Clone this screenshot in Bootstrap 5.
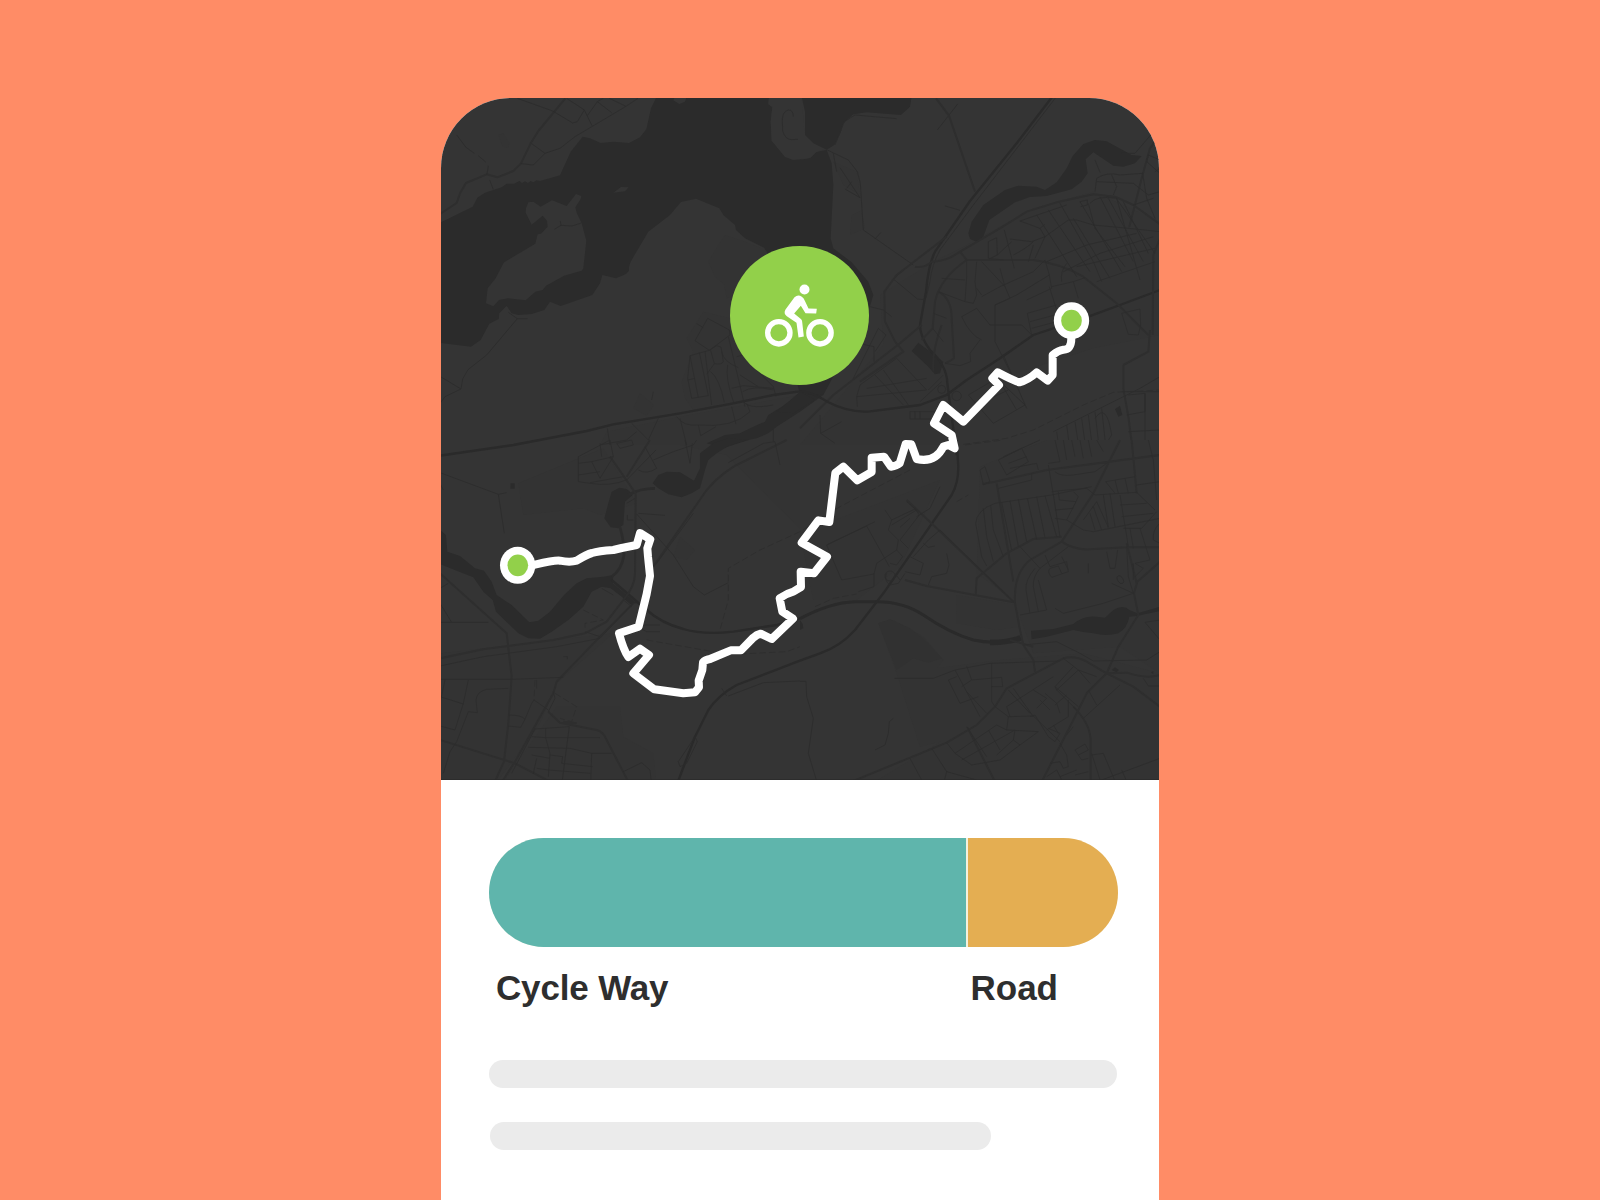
<!DOCTYPE html>
<html lang="en">
<head>
<meta charset="utf-8">
<meta name="viewport" content="width=device-width, initial-scale=1">
<title>Cycle route</title>
<link href="https://cdn.jsdelivr.net/npm/bootstrap@5.3.0/dist/css/bootstrap.min.css" rel="stylesheet">
<style>
body{background:#ff8c66;font-family:"Liberation Sans",Arial,sans-serif;height:1200px;overflow:hidden}
.route-card{width:718px;height:1102px;margin-top:98px;border-radius:70px 70px 0 0}
.route-map{height:682px;background:#343434}
.mode-badge{width:139px;height:139px;top:148px;left:289px;background:#92d04a}
.details{padding:57.5px 41px 0 48.4px}
.split{height:109.5px;gap:2px;background:#f4f1df}
.seg-cycle{background:#5fb5ac}
.seg-road{background:#e4ae52}
.legend-row{margin-top:20px;color:#2e2e2e;font-size:35px;line-height:42px;font-weight:700}
.legend-cycle{padding-left:6.6px;width:481.1px;letter-spacing:-.15px}
.bone{height:28.2px;background:#ebebeb}
.bone-list{margin-top:51.2px;gap:33.2px}
.land{fill:#343434}.tint{fill:#333}.water{fill:#2b2b2b}
.big,.mid,.thin,.dash{fill:none;stroke-linejoin:round}
.big{stroke:#2a2a2a;stroke-width:7}
.mid{stroke:#2e2e2e;stroke-width:6}
.thin{stroke:#2c2c2c;stroke-width:2.6}
.dash{stroke:#2d2d2d;stroke-width:2.6;stroke-dasharray:20 9}
</style>
</head>
<body>
<main class="route-card bg-white mx-auto overflow-hidden d-flex flex-column">
<section class="route-map position-relative flex-shrink-0">
<svg class="d-block" width="718" height="682" viewBox="441 98 718 682" aria-label="Route map">
<!-- north-west: lake and islands -->
<g transform="translate(440 95) scale(.33333)">
<path class="tint" d="M855 420L835 450 805 500 825 545 852 568 860 610 900 600 980 465 915 440ZM790 650L740 730 760 770 725 860 735 910 760 945 1080 885 1080 870 870 670ZM600 895L580 940 620 962 642 930ZM500 1010L720 965 1080 900 1080 1035 1080 1300 860 1080 720 1050 480 1050Z"/>
<path class="water" d="M0 383L98 335 112 308 135 293 185 277 200 266 222 266 238 258 246 264 255 259 264 264 272 258 280 262 290 256 300 258 360 241 392 170 428 125 450 130 482 144 520 140 567 144 600 127 619 103 633 40 650 5H987L985 28 997 36 992 80 995 137 1035 183 1055 193 1090 193 1108 190 1130 170 1160 165 1175 205 1180 270 1172 430 1180 460 1235 502 1285 560 1300 600 1285 650 1150 900 1080 900 980 470 972 458 915 430 888 405 885 390 850 360 838 340 768 311 723 321 690 360 625 410 572 500 567 515 567 527 558 537 528 550 487 540 480 565 457 600 362 633 330 620 313 645 275 657 235 660 215 655 200 632 178 655 176 672 148 686 122 735 93 755 0 744Z"/>
<path class="land" d="M258 340L265 322 280 320 302 335 336 316 380 333 408 297 424 303 422 312 406 337 410 353 425 385 439 437 430 520 425 527 372 542 318 572 308 585 286 590 257 616 204 610 177 615 160 634 138 625 143 580 167 550 192 502 286 446 293 418 303 416 323 395 321 377 308 362 275 389 257 353ZM520 293L543 276 566 277 555 289ZM700 16L705 5H740L735 20 718 27Z"/>
<path class="land" d="M1080 5H1085L1093 110 1110 132 1160 160 1128 172 1112 188 1060 195 1035 186 995 137 992 80 997 36 985 28 987 5Z"/>
<path class="tint" d="M175 120L190 115 208 145 205 158 188 155Z"/>
<path class="mid" d="M0 357L50 324 60 295 78 264 140 238 172 247 220 228 243 205 272 145 295 108 376 10"/>
<path class="thin" d="M232 10L338 48 398 84 412 80 433 45 380 10M433 45L456 92 M442 62L472 20 515 53M472 20L490 10M508 10L558 34 594 10M558 34L405 125 360 160 315 175 280 210 243 206M275 146L315 175M50 120L78 157 103 175M115 182L138 202M145 212L141 238M149 255L160 284M1060 65Q1060 45 1045 45Q1027 50 1027 75L1028 108Q1036 134 1055 134L1074 133M343 403L363 391 396 393 424 384M361 378L363 391M205 652L232 671 140 780 84 824 68 852 63 882 15 905 0 925M232 671H263M0 844L63 882"/>
<path class="thin" d="M803 670L765 737 808 766 870 720 868 705 803 670M770 686L790 698M808 766L750 782 775 908M750 782L743 850 755 910 805 902 778 772M765 850L743 855M795 770L815 930M812 766L823 806 800 838M823 806Q845 810 850 800L843 756 830 752 808 766M812 830Q838 850 853 922M865 725L915 935M845 770Q850 800 895 818M863 810Q855 850 882 925M875 880L910 872 1000 880M890 785L910 780M900 840L955 875M915 790L1000 875 1008 905M908 890Q940 870 1000 885M908 915Q920 945 1000 930M640 890L635 915M875 935L888 988M710 965Q730 995 775 990Q880 1000 930 950L920 925M775 990L782 1022 828 995M575 985L625 1035 655 970M502 1000L510 1050M720 970L740 1050M480 1050L560 1035 590 1010M1000 995V1040"/>
<path class="water" d="M1080 897L1025 935 985 960 975 980 940 995 900 1015 855 1020 800 1045 850 1060 925 1035 950 1030 985 1015 1010 995 1080 950 1150 900Z"/>
</g>
<!-- north-east: town, railway and creek -->
<g transform="translate(800 95) scale(.33333)">
<path class="tint" d="M500 450L700 340 880 290 1080 380V720L880 760 600 850 440 1050H0L250 750 240 600 400 500ZM155 360L185 345 195 400 150 420ZM100 200L170 230 180 300 130 270Z"/>
<path class="water" d="M5 5H335L330 35 303 60 200 52 160 58 130 85 122 112 103 150 80 164 40 145 15 120V50ZM505 415L515 380 550 330 615 285 655 272 710 275 735 285 770 262 800 220 818 183 850 147 885 135 920 139 950 155 995 180 1025 183 1005 205 970 215 940 212 880 172 857 193 863 235 845 260 815 283 740 303 690 306 645 322 568 375 550 425 530 440 510 432ZM335 768L355 743 430 800 420 835 405 838 385 815Z"/>
<path class="big" d="M757 5L650 145 510 318 405 470Q385 510 378 590L360 690Q360 725 390 765Q440 810 442 865L470 1080M1080 585L960 630 865 665 700 720 600 790 500 855 440 900"/>
<path class="thin" d="M767 8L520 330 420 465Q395 510 390 560L378 610M80 164L145 195 172 230 181 265 190 405 340 510M105 150L133 80 165 60 290 71M100 175L110 230M120 218L180 308 135 282M155 260L140 280M225 432L243 412M435 333L480 346M412 105L473 27M280 552L352 612 375 614M280 552L340 500"/>
<path class="mid" d="M408 10L447 62 525 290M180 860L310 770 285 740 255 680 253 590 290 540 440 425M0 1000L100 900 300 745 365 690M480 470L600 400 680 350 770 322 880 298 945 305 1000 330 1080 388M345 515Q375 520 395 500Q440 500 480 470L500 495H700Q780 505 850 545L950 625 1045 720M400 830Q395 770 425 690M1058 720L1060 480 1080 430M1080 120L1050 160 1025 250 988 395M970 810V880L985 965 1000 1080M970 810L1045 770 1050 705"/>
<path class="mid" d="M500 495Q420 550 405 620L398 700 365 735M415 590Q455 610 455 670L462 790Q450 800 435 805"/>
<path class="thin" d="M565 440V490L612 495M565 440L590 428 592 480 635 440M592 480L568 492M613 405L643 520M630 432L695 440 735 425 720 400 660 378M640 480Q680 460 700 440M685 500L700 450M735 425L705 490M720 400L735 388M735 495L700 530 600 575 545 605M735 495L748 540 650 600 585 630V740L640 850M748 540L755 580 680 615M755 575L820 560 855 548M820 560L835 610M785 560Q780 530 800 505M748 575L770 645M682 655L770 630M682 655L695 720M690 680L765 660M695 700L770 680M545 500L615 575 630 610M500 500V545L495 620 520 625 530 600 525 560 530 500M495 555L425 550M495 620L415 590M530 640L485 665Q510 720 545 735M530 640L570 690H665L695 720M545 600L530 580M615 575L600 520M585 630L630 610M400 655L440 670M398 700L430 740M540 735L510 775 512 800 480 812 435 805"/>
<path class="thin" d="M710 360L830 545M745 345L870 530M780 325L880 500 905 560M820 370L930 550M840 320L965 530M865 325L885 400 975 515M870 325Q890 300 950 310L1020 555M900 305L1000 500M925 310L1030 500M950 312L1065 475M970 320L1045 475M660 378L800 330M735 425L805 375H830L880 390 985 400 1080 410M740 500L860 450 1010 415M790 530L900 475 1060 425M890 560L1065 500M830 515L1065 460M885 290L890 250Q920 230 960 240L1028 235M935 240L950 275 940 300M890 260L1000 265 1045 300 1080 290M1028 235L1040 310 1065 370M1040 200L1080 235M1040 200L1045 180 1080 195M1065 230L1080 220M1000 330L1060 310M885 195L900 232M965 175H1005L1065 105M840 320L862 315V330L842 335"/>
<path class="thin" d="M170 905L180 870 290 790 380 885 170 905 172 935M225 840L310 930M250 825L325 930M200 880L380 850M385 885L430 840M235 700L160 850M235 700L258 720 225 770M175 745L222 755V800M210 635L250 645 275 665M360 920L425 860M505 900L590 850 675 930 580 985ZM530 930L625 885M600 860L650 945M610 780L680 940M965 655L1020 642 1022 690 1015 720 985 718ZM330 950H420V972H330ZM345 950V972M360 950V972M60 960L62 1015 125 980M62 1015L105 1045M965 890H1080M985 900L1035 895V950L980 960M1035 895V1050M985 1010L1080 1005M1080 845L1020 880 880 950 760 1010M770 1010L780 1080M800 990L812 1080M825 980L840 1080M845 970L860 1080M865 960L880 1080M885 950L900 1080M905 940L920 1080M885 970Q920 920 935 1020L910 1060"/>
<circle class="thin" cx="425" cy="883" r="12"/><circle class="thin" cx="470" cy="903" r="14"/>
<path class="dash" d="M490 1048L620 1030 700 1005 850 930 940 892 1080 885"/>
<path class="water" d="M945 942L960 932 967 960 955 965ZM0 890L45 915 20 930 -20 955 -70 950Z"/>
<!-- main east-west line -->
<path class="big" d="M-1080 1082L-860 1050 -640 1008 -560 988 -360 955 -200 925 -80 900 0 889Q30 887 85 922Q150 955 210 949L360 930 445 898"/>
</g>
<!-- south-west: river and village -->
<g transform="translate(440 440) scale(.33333)">
<path class="tint" d="M235 130L490 25 590 190 480 225 430 205 250 225ZM720 290L765 330 740 360 700 350ZM0 640L520 580 350 730 300 850 220 960 160 1040H0ZM350 800H540L550 890 640 940 650 1040H180Z"/>
<path class="water" d="M0 270L18 285 22 335 60 348 105 385 132 392 155 425 170 465 215 495 268 547 295 542 330 515 372 465 410 430 440 415 490 410 520 405 518 430 590 490 570 492 545 470 512 445 485 440 455 455 430 500 385 540 335 575 300 596 265 595 235 580 168 515 158 480 130 455 100 412 50 392 0 372ZM505 190L515 155 538 143 560 147 570 155 578 165 555 185 550 255 535 265 512 262 493 235ZM638 130L655 105 680 95 720 97 762 122 780 85 780 40 820 10 865 -5 925 0 870 15 830 40 805 60 795 90 780 145 755 160 725 172 685 163 655 145ZM212 130H224V146H211Z"/>
<path d="M540 262Q552 300 552 345Q545 390 515 410M565 165Q600 145 645 145" fill="none" stroke="#2c2c2c" stroke-width="8"/>
<path class="big" d="M515 420L620 510Q665 550 730 567Q790 585 880 575L1010 555 1080 535M710 1035L765 890 805 810Q835 765 890 735L1080 662"/>
<path class="mid" d="M0 655L130 628 340 600 435 580 500 545 550 480Q585 440 585 400L587 160 510 50M0 400L200 580 215 710 205 850 192 965 160 1035M0 900L225 970 350 1035M580 490L480 590 350 725 340 760 225 965 180 1035M325 815L360 848 470 870Q490 875 500 900L570 1035M640 380L800 150Q850 90 920 60L1040 0M370 845L410 850M560 110L630 0"/>
<path class="thin" d="M0 678L130 650 350 620 480 595 580 490M0 98L175 163 193 280M175 163L200 158M0 718H215L370 712M0 490L35 547M0 547H145M0 445L25 430M0 130L10 150M415 50L510 0M415 50V125L450 130Q510 140 560 120L648 30M415 70L455 65 520 50 510 0M455 65L480 115 520 50M480 10L485 50M415 105L480 95M450 128L550 110M595 90Q620 105 650 85L615 20M530 10L575 0 580 15 540 25ZM640 60L700 35 760 15 770 0M735 0L750 70 757 10M865 68L970 10 1005 5 1020 75M595 220L675 226M590 222L700 345 760 440 793 465 865 428M560 190L585 175M562 225V240H580M650 370L760 220M85 720L70 790 45 870 0 858M15 720L0 790M0 770L70 792M205 745L140 748Q110 755 108 780L112 818 85 815 50 905 30 935 10 1000M205 825Q245 825 255 838L242 862 205 858M255 838L275 790 282 780 325 810M290 720V745M340 755L345 775 325 815M285 867L388 860 365 1035M285 867L215 1000M275 890L317 893H480M317 865V893L330 940 325 1010M265 922L390 925 455 940H515M275 945L330 955M330 945L368 950 365 970 458 980M455 940L452 1035M290 985L325 990 452 1000M290 955L280 1000M550 995L605 968 630 990 635 1035M865 768L970 728 1080 723M845 745L860 768M765 890L772 905 740 970 720 980M765 890L715 965 720 980M610 555H660M600 565L620 575H660M370 650H382V658M435 575L480 590M485 445L520 465M550 480L575 500"/>
<path class="dash" d="M1080 275L960 330 865 385V480L840 570M620 600L820 635M900 642L1040 635 1080 620M430 510L490 540 435 550V565M345 760L410 800 395 845 360 835M285 720L282 780"/>
</g>
<!-- south-east: suburbs, motorway and pond -->
<g transform="translate(800 440) scale(.33333)">
<path class="tint" d="M235 550L280 540 370 590 430 660 400 700 440 900 360 920 290 700ZM470 465L650 495 660 560 590 570 470 550ZM540 80L740 0H1080V700L960 620 700 640 640 480 530 400ZM290 700L600 660 850 640 1080 700V1040H200L430 900ZM0 280L420 120 300 380 170 480 40 480Z"/>
<path fill="#313131" d="M235 550L270 538 330 565 375 600 425 655 385 668 340 655 290 690Z"/>
<path class="water" d="M693 572L760 567 820 552Q850 525 890 530L915 533 940 510Q970 492 988 510L1012 520 1080 500V513L1010 528 988 530Q982 565 955 580Q920 590 880 580Q850 577 820 570L740 590 695 598ZM0 540L8 552 10 565 0 570Z"/>
<path d="M0 536Q90 487 165 485H230Q310 485 370 525Q450 580 520 600Q590 615 662 595" fill="none" stroke="#2a2a2a" stroke-width="9"/>
<path d="M570 607Q620 608 662 594" fill="none" stroke="#2a2a2a" stroke-width="17"/>
<path class="big" d="M470 0L475 80Q475 130 455 165L250 460 165 570Q120 620 60 640L0 662"/>
<path class="mid" d="M155 1025L440 908 530 855 585 800 620 745 790 655Q825 645 860 665L920 700 980 698Q1040 718 1080 705M720 1035L820 840 860 760 920 700 955 620 1015 525 1002 460 1012 425 1080 365M548 132L585 125 740 90 1080 45M960 0L880 160 785 305 690 360Q640 400 645 490L660 570 670 615 700 660 705 695M785 305Q820 330 870 328L980 322H1080M590 130L640 425M785 290L700 297 620 340 530 415 527 465M315 420L380 438 640 487M502 862L590 1035M820 800Q870 850 872 900V1035M995 0L1010 160M645 490L400 255 320 180M920 700L1000 740 1080 800M1010 430L980 310M630 600L700 620"/>
<path class="thin" d="M640 485L420 270 385 300 340 350M200 258L80 315 125 420 222 402 230 370 290 330 295 300 265 270 275 240 345 207 358 225 300 300M275 255L350 210M200 258L268 380M255 210L275 240M350 230L390 205 420 140M80 315L225 245M320 185L355 215M330 350L370 370 360 405 315 395M370 310L385 322 405 318M440 340L447 375 440 400 395 410 385 435M290 330L308 350 290 375 270 370M300 300L325 325M222 402V440L175 455M260 400Q250 420 270 435L295 430 315 400M285 400L300 420M300 262L330 235M283 715H400L465 690 570 670 780 663M465 690L540 830M500 678L515 720 605 712 608 740H575V670M575 740V785L585 800M445 720L480 790 535 770M445 720L470 710M485 740L515 720M500 755L560 820M585 800L625 830 700 828 780 905M625 830L620 870 715 875 660 915 600 960 515 975 465 940 440 908M465 940L590 855 620 870M485 960L645 870 640 900 660 915M565 870L600 930M500 860L560 950M640 900L590 945M620 800L760 710M625 750L690 820M640 745L700 830M620 800L630 830M700 750L740 775 710 805M720 780L750 810M735 760L770 790 780 820M765 795L800 765M790 655L835 690 890 710M820 680L765 740 770 750 835 690M765 740L835 800M770 750L830 810M835 690L870 730M865 750L890 795M850 835L960 735M805 780V830L740 870M690 830L705 825 745 890 765 905 780 880 745 865M760 855L775 880M330 955L365 1020M395 925L440 995 530 1020M440 995L430 1035M875 940L905 1035M875 945L910 940 950 1035M905 1020L1080 955M965 990L985 1035M825 930L855 912 865 930 835 945ZM835 945L845 960 865 955M750 970L780 965 790 985 805 980 800 945 780 910M740 1010L770 990 785 1020M780 1010L830 990M825 1005L865 995M820 860L800 885M1030 715L1045 738H1080M1035 547L1080 600M1035 547L1080 540M1080 635L1040 660 880 663M670 615L770 605 840 640 880 663M935 430L1000 460 910 490 790 520 765 505"/>
<path class="thin" d="M540 90L555 80 570 125 550 135ZM595 60L665 25 685 65 620 105ZM610 50L720 0M625 70L680 50M630 85L710 70 715 90M595 145L695 120V100M585 190L755 165 875 140M527 250Q530 210 585 190M527 250L545 350 560 378M550 205L560 290 580 365M572 195L580 270 610 350M605 187L635 330M630 182L655 320M655 178L680 305M682 175L710 298M710 170L735 292M735 167L770 290M745 75L760 165 780 290M745 70L780 65M765 95Q780 110 820 105L885 95 920 70M765 0L780 65M790 0L800 60M815 0L825 50M840 0L850 55M865 0L875 50M890 0L910 35M755 155L800 150 860 145 885 165 1010 157M775 155L778 180 828 185 800 240 765 235M765 210L820 205M828 185L835 170 820 155M800 240L850 270 880 275 1080 235M850 240L890 185 925 262M870 220L885 270M880 200L905 270M910 165L925 262M930 160L945 260M917 125L1005 110M917 125L945 160M945 120L955 160M975 115L985 160M960 165L985 320M960 195L1040 190M965 230L1060 220M970 265H1025L1070 215M1010 157L1065 210M990 265L1000 325M1060 285Q1065 260 1080 250M1060 285V300L1080 310M1010 135L1080 125M1045 0L1060 60 1070 180M1020 265L1050 360 1005 370M1000 370V420M1005 370L1030 385 1005 410M980 320L985 410 1000 460M920 335L930 385H945L953 330M705 385Q675 420 678 450L690 520M720 385Q698 410 700 440L715 515M660 525L740 510 715 420M735 345L750 380 800 365 805 395 755 412Q740 395 750 385L775 378 785 400M785 350L805 390M660 320L720 385 805 320M865 370V400"/>
<ellipse class="thin" cx="961" cy="419" rx="8" ry="13" transform="rotate(-30 961 419)"/><circle class="thin" cx="270" cy="408" r="15"/>
<path class="dash" d="M330 90L120 200 0 275M495 15L610 0M470 185L505 165M45 500L100 475 170 462"/>
<path class="thin" d="M0 724H18L20 770 40 835 25 940 52 1030M225 930L255 915 265 880 268 845 280 835"/>
<path class="water" d="M935 690L945 682 957 690 950 697ZM1053 697L1060 693V703Z"/>
</g>
<path d="M441 779.7H1159" stroke="#282828" stroke-width=".8"/>
<!-- travelled route with its two end points -->
<g transform="translate(440 440) scale(.33333)">
<path d="M233 376L285 374Q345 360 360 362Q390 368 410 362Q440 343 456 339Q475 333 520 330L545 324 590 315 600 279 631 298 622 325 624 350 630 408 620 462 596 560 537 580Q550 630 565 651L600 626 627 645 580 700 643 748 730 760 765 757 777 742 776 722 787 690 789 667Q795 660 810 657L872 631H903L940 593Q950 584 962 581L995 597 1059 536 1027 515 1019 475Q1040 460 1060 455L1083 441 1082 395 1122 400 1161 350 1085 308 1135 241 1168 246 1186 99 1210 80 1252 121 1295 96V53L1332 50 1353 80Q1370 78 1379 70L1397 12 1414 13 1430 57Q1485 70 1510 20L1525 15 1544 25 1535 -15 1482 -50 1510 -105 1570 -55 1677 -165 1657 -185 1673 -203Q1720 -178 1738 -173Q1765 -180 1790 -203L1823 -178 1838 -195V-255Q1855 -269 1870 -271Q1894 -270 1894 -305V-358" fill="none" stroke="#fff" stroke-width="24" stroke-linejoin="round"/>
<g fill="#fff"><ellipse cx="233" cy="376" rx="53" ry="55.5"/><ellipse cx="1894.5" cy="-358" rx="53" ry="55.5"/></g>
<g fill="#92d04a"><ellipse cx="233.500" cy="376" rx="31" ry="32.500"/><ellipse cx="1894.500" cy="-358" rx="31" ry="32.500"/></g>
</g>
</svg>
<div class="mode-badge position-absolute rounded-circle d-flex align-items-center justify-content-center">
<svg width="139" height="139" viewBox="16.500 19.500 417 417" aria-label="Cycling">
<g fill="none" stroke="#fff" stroke-width="16"><circle cx="163" cy="280" r="33.500"/><circle cx="286.500" cy="280" r="33.500"/></g>
<circle cx="240" cy="150" r="15" fill="#fff"/>
<path fill="#fff" d="M210 173Q221 164 232 172Q238 176 242 186L252 207 277 208 275 222 243 221 229 199 209 222 230 239Q233 242 233 247L238 291 222 294 216 250 187 230Q176 222 183 210Z"/>
</svg>
</div>
</section>
<section class="details">
<div class="split d-flex rounded-pill overflow-hidden">
<div class="seg-cycle" style="width:75.850%"></div>
<div class="seg-road flex-fill"></div>
</div>
<div class="legend-row d-flex"><span class="legend-cycle">Cycle Way</span><span>Road</span></div>
<div class="bone-list d-flex flex-column">
<div class="bone rounded-pill" style="width:628px"></div>
<div class="bone rounded-pill" style="width:500.500px;margin-left:1px"></div>
</div>
</section>
</main>
<script src="https://cdn.jsdelivr.net/npm/bootstrap@5.3.0/dist/js/bootstrap.bundle.min.js"></script>
</body>
</html>
